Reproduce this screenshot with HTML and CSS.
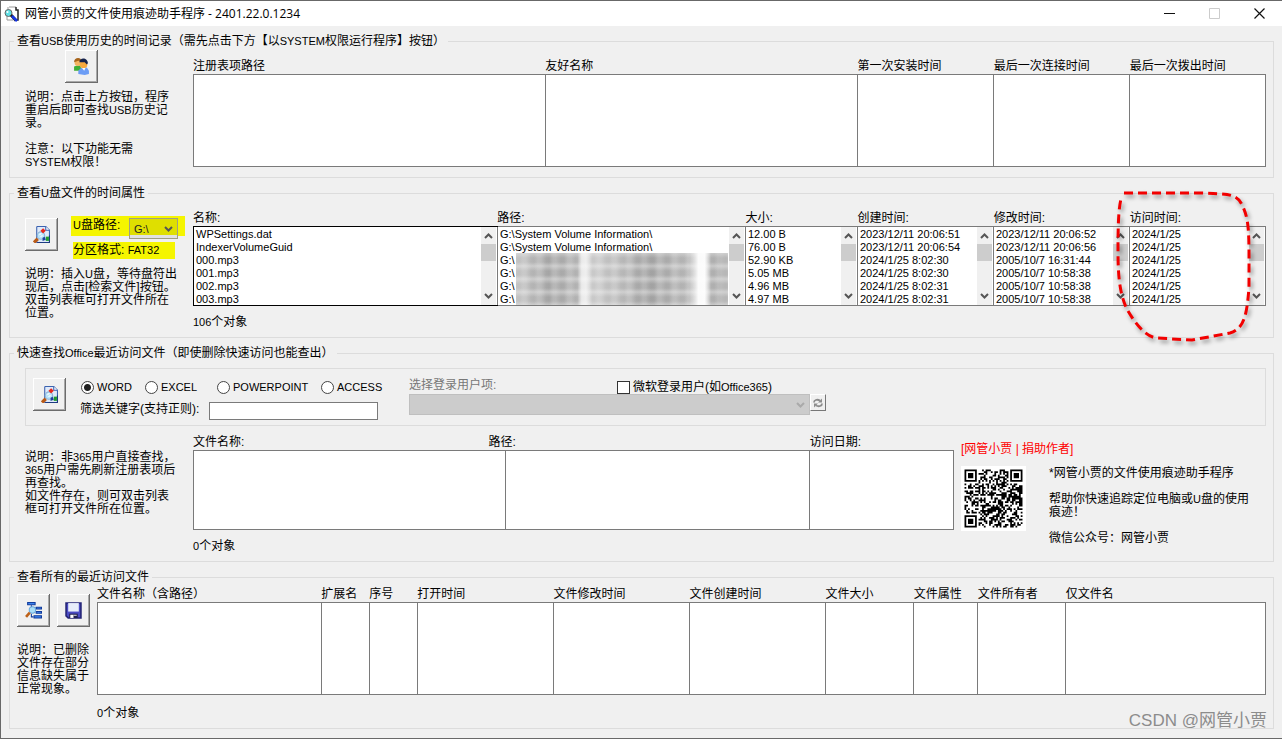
FILE: index.html
```html
<!DOCTYPE html>
<html lang="zh-CN">
<head>
<meta charset="utf-8">
<title>网管小贾的文件使用痕迹助手程序</title>
<link rel="stylesheet" href="styles.css">
</head>
<body>
<svg class="defs" aria-hidden="true">
  <symbol id="up" viewBox="0 0 9 6"><path d="M1 5L4.500 1.500L8 5" fill="none" stroke="#555" stroke-width="2"/></symbol>
  <symbol id="down" viewBox="0 0 9 6"><path d="M1 1L4.500 4.500L8 1" fill="none" stroke="currentColor" stroke-width="2"/></symbol>
  <symbol id="find" viewBox="0 0 16 16">
    <path d="M4 .5h8l3.500 3.500v11.500H3.500V1z" fill="#dfeafa" stroke="#3b62b0"/>
    <path d="M12 .5V4h3.500" fill="#fff" stroke="#3b62b0"/>
    <path d="M4 15.500h11.500V9" fill="none" stroke="#1c3a80"/>
    <circle cx="7.500" cy="9" r="3.500" fill="#b9e4fa" stroke="#8fb4d8"/>
    <path d="M9.500 2l2.500 2.500L9.500 7 7 4.500z" fill="#e8281c"/>
    <path d="M12 10h3v4h-3z" fill="#1e9b2d"/><path d="M9 11l2-1 1 3-3 1z" fill="#1c3f9e"/>
    <path d="M6 8l2-1M7 10l2-1" stroke="#fff"/>
    <path d="M4.500 12L1 15.500" stroke="#b85a17" stroke-width="3"/>
  </symbol>
</svg>
<div class="window">
  <header class="titlebar">
    <svg class="app-icon" viewBox="0 0 16 16">
      <path d="M5 1h7v2h2v11H5z" fill="#fff"/><path d="M5 1h7M4 1v3M3 9v5h6" stroke="#999" fill="none"/><path d="M12 1v3h2v10h-3" stroke="#222" fill="none" stroke-width="1.500"/>
      <circle cx="4.500" cy="7" r="3.500" fill="#5ee0e6" stroke="#666"/><circle cx="3.500" cy="6" r="1" fill="#fff"/>
      <path d="M7 9l5 5.500" stroke="#222" stroke-width="3"/><path d="M8 10l5 5" stroke="#1535e8" stroke-width="2.500"/>
    </svg>
    <h1 class="title">网管小贾的文件使用痕迹助手程序 - 2401.22.0.1234</h1>
    <div class="controls">
      <button class="control" aria-label="最小化"><svg viewBox="0 0 11 11"><path d="M0 5.500h11" stroke="#111"/></svg></button>
      <button class="control" aria-label="最大化" disabled><svg viewBox="0 0 11 11"><path d="M.5.5h10v10H.5z" fill="none" stroke="#ccc"/></svg></button>
      <button class="control" aria-label="关闭"><svg viewBox="0 0 11 11"><path d="M.5.5l10 10M10.500.5l-10 10" stroke="#111" stroke-width="1.200"/></svg></button>
    </div>
  </header>

  <main class="content">
    <fieldset class="group group-usb">
      <legend>查看<span class="lat">USB</span>使用历史的时间记录（需先点击下方【以<span class="lat">SYSTEM</span>权限运行程序】按钮）</legend>
      <div class="split">
        <div class="side side-usb">
          <button class="tool" aria-label="以SYSTEM权限运行程序">
            <svg viewBox="0 0 16 16">
              <path d="M1 12V8l3-1h3l1 5z" fill="#3fae35"/><circle cx="4.500" cy="4.500" r="3" fill="#f4b461"/><path d="M1 4c0-5 7-5 7-1L5 2.500z" fill="#a7641b"/>
              <path d="M5 15v-3l3-3h5l2 3v3l-4 1z" fill="#6c9df5"/><path d="M8 9h4l-1.500 3z" fill="#fff"/>
              <circle cx="10" cy="6" r="3.500" fill="#f7a93f"/><path d="M6 4c0-5 8-5 8 1l-1 1-2-2z" fill="#16234c"/>
            </svg>
          </button>
          <p class="note">说明：点击上方按钮，程序<br>重启后即可查找<span class="lat">USB</span>历史记<br>录。<br><br>注意：以下功能无需<br><span class="lat">SYSTEM</span>权限！</p>
        </div>
        <div class="lists">
          <div class="heads cols-usb"><span>注册表项路径</span><span>友好名称</span><span>第一次安装时间</span><span>最后一次连接时间</span><span>最后一次拨出时间</span></div>
          <div class="boxes cols-usb tall"><div></div><div></div><div></div><div></div><div></div></div>
        </div>
      </div>
    </fieldset>

    <fieldset class="group">
      <legend>查看<span class="lat">U</span>盘文件的时间属性</legend>
      <div class="split">
        <div class="side side-disk">
          <div class="disk">
            <button class="tool" aria-label="检索文件"><svg><use href="#find"/></svg></button>
            <div class="disk-fields">
              <div class="mark mark-path">
                <label for="drive"><span class="lat">U</span>盘路径:</label>
                <span class="combo drive"><select id="drive"><option>G:\</option></select><svg><use href="#down"/></svg></span>
              </div>
              <div class="mark mark-format">分区格式: <span class="lat">FAT32</span></div>
            </div>
          </div>
          <p class="note">说明：插入<span class="lat">U</span>盘，等待盘符出<br>现后，点击[检索文件]按钮。<br>双击列表框可打开文件所在<br>位置。</p>
        </div>
        <div class="lists">
          <div class="heads cols-disk"><span>名称:</span><span>路径:</span><span>大小:</span><span>创建时间:</span><span>修改时间:</span><span>访问时间:</span></div>
          <div class="boxes cols-disk short">
            <div class="focused"><ul><li>WPSettings.dat</li><li>IndexerVolumeGuid</li><li>000.mp3</li><li>001.mp3</li><li>002.mp3</li><li>003.mp3</li></ul><div class="scroll"><svg><use href="#up"/></svg><i></i><svg><use href="#down"/></svg></div></div>
            <div><ul><li>G:\System Volume Information\</li><li>G:\System Volume Information\</li><li>G:\</li><li>G:\</li><li>G:\</li><li>G:\</li></ul><div class="mosaic"></div><div class="scroll"><svg><use href="#up"/></svg><i></i><svg><use href="#down"/></svg></div></div>
            <div><ul><li>12.00 B</li><li>76.00 B</li><li>52.90 KB</li><li>5.05 MB</li><li>4.96 MB</li><li>4.97 MB</li></ul><div class="scroll"><svg><use href="#up"/></svg><i></i><svg><use href="#down"/></svg></div></div>
            <div><ul><li>2023/12/11 20:06:51</li><li>2023/12/11 20:06:54</li><li>2024/1/25 8:02:30</li><li>2024/1/25 8:02:30</li><li>2024/1/25 8:02:31</li><li>2024/1/25 8:02:31</li></ul><div class="scroll"><svg><use href="#up"/></svg><i></i><svg><use href="#down"/></svg></div></div>
            <div><ul><li>2023/12/11 20:06:52</li><li>2023/12/11 20:06:56</li><li>2005/10/7 16:31:44</li><li>2005/10/7 10:58:38</li><li>2005/10/7 10:58:38</li><li>2005/10/7 10:58:38</li></ul><div class="scroll"><svg><use href="#up"/></svg><i></i><svg><use href="#down"/></svg></div></div>
            <div><ul><li>2024/1/25</li><li>2024/1/25</li><li>2024/1/25</li><li>2024/1/25</li><li>2024/1/25</li><li>2024/1/25</li></ul><div class="scroll"><svg><use href="#up"/></svg><i></i><svg><use href="#down"/></svg></div>
              <svg class="circle-mark" viewBox="0 0 150 160"><path d="M14 6H92C118 7 126 7 131 16C140 32 139 46 139 100C137 128 134 142 120 146L82 153L46 151C34 149 24 134 18 124C8 106 8 80 8 60C8 34 9 16 12 9"/></svg>
            </div>
          </div>
          <p class="count"><span class="lat">106</span>个对象</p>
        </div>
      </div>
    </fieldset>

    <fieldset class="group">
      <legend>快速查找<span class="lat">Office</span>最近访问文件（即使删除快速访问也能查出）</legend>
      <div class="filter">
        <button class="tool" aria-label="查找最近访问文件"><svg><use href="#find"/></svg></button>
        <div class="query">
          <div class="apps">
            <label><input type="radio" name="app" checked>WORD</label>
            <label><input type="radio" name="app">EXCEL</label>
            <label><input type="radio" name="app">POWERPOINT</label>
            <label><input type="radio" name="app">ACCESS</label>
          </div>
          <div class="keyword"><label for="keyword">筛选关键字(支持正则):</label><input id="keyword" type="text"></div>
        </div>
        <div class="users">
          <div class="users-head">
            <label class="muted" for="user">选择登录用户项:</label>
            <label class="ms-user"><input type="checkbox"><span>微软登录用户(如<span class="lat">Office365</span>)</span></label>
          </div>
          <div class="users-pick">
            <span class="combo user"><select id="user" disabled></select><svg><use href="#down"/></svg></span>
            <button class="refresh" aria-label="刷新" disabled><svg viewBox="0 0 12 12"><path d="M2 5.500C2 3 5 2 8 3.500M10 6.500C10 9 7 10 4 8.500" fill="none" stroke="#8c8c8c" stroke-width="1.800"/><path d="M6 5.500h4v-4zM6 6.500H2v4z" fill="#8c8c8c"/></svg></button>
          </div>
        </div>
      </div>
      <div class="split split-office">
        <div class="side side-office">
          <p class="note">说明：非<span class="lat">365</span>用户直接查找，<br><span class="lat">365</span>用户需先刷新注册表项后<br>再查找。<br>如文件存在，则可双击列表<br>框可打开文件所在位置。</p>
        </div>
        <div class="office-lists">
          <div class="heads heads-office"><span>文件名称:</span><span>路径:</span><span>访问日期:</span></div>
          <div class="boxes cols-office short"><div></div><div></div><div></div></div>
          <p class="count"><span class="lat">0</span>个对象</p>
        </div>
        <div class="about">
          <a class="donate" href="#donate">[网管小贾 | 捐助作者]</a>
          <div class="about-body">
            <svg class="qr" id="qr" viewBox="0 0 37 37" role="img" aria-label="微信公众号二维码"></svg>
            <p class="note">*网管小贾的文件使用痕迹助手程序<br><br>帮助你快速追踪定位电脑或<span class="lat">U</span>盘的使用<br>痕迹！<br><br>微信公众号：网管小贾</p>
          </div>
        </div>
      </div>
    </fieldset>

    <fieldset class="group">
      <legend>查看所有的最近访问文件</legend>
      <div class="split split-all">
        <div class="side side-all">
          <div class="tools">
            <button class="tool" aria-label="查找"><svg viewBox="0 0 16 16"><path d="M2.500.5h7v2h-7zM10.500 5h5v1.500h-5zM10.500 9h5v1.500h-5zM8.500 13h7v2h-7z" fill="#3c82ee" stroke="#123d9c"/><path d="M6 3v3M6 11v3h2M8 6h3" stroke="#123d9c" fill="none"/><circle cx="7" cy="7.500" r="3" fill="#a8def8" stroke="#6aa8dc"/><path d="M4.500 10L1 14" stroke="#bd6119" stroke-width="2.500"/></svg></button>
            <button class="tool" aria-label="保存"><svg viewBox="0 0 16 16"><path d="M1 1h14v14H3l-2-2z" fill="#4b4bc4" stroke="#252577" stroke-width="1.500"/><path d="M3 1h10v8H3z" fill="#e7edfb"/><path d="M4 11h8v4H4z" fill="#20204f"/><path d="M5 12h3v3H5z" fill="#fff"/><path d="M8 12h3v1H8z" fill="#ddd"/></svg></button>
          </div>
          <p class="note">说明：已删除<br>文件存在部分<br>信息缺失属于<br>正常现象。</p>
        </div>
        <div class="lists lists-all">
          <div class="heads cols-all"><span>文件名称（含路径）</span><span>扩展名</span><span>序号</span><span>打开时间</span><span>文件修改时间</span><span>文件创建时间</span><span>文件大小</span><span>文件属性</span><span>文件所有者</span><span>仅文件名</span></div>
          <div class="boxes cols-all tall"><div></div><div></div><div></div><div></div><div></div><div></div><div></div><div></div><div></div><div></div></div>
          <p class="count count-all"><span class="lat">0</span>个对象</p>
        </div>
      </div>
    </fieldset>
  </main>
  <div class="watermark">CSDN @网管小贾</div>
</div>
<script src="script.js"></script>
</body>
</html>
```
FILE: styles.css
```css
* { box-sizing: border-box; }
body, h1, p, ul, fieldset { margin: 0; padding: 0; }
body {
  background: #f0f0f0;
  color: #000;
  font: 12px/14px "Liberation Sans", "Noto Sans CJK SC", sans-serif;
}
button, input, select { font: inherit; color: inherit; margin: 0; padding: 0; }
svg { display: block; }
.defs { display: none; }
.lat { font-size: 11px; }
.window {
  position: relative;
  min-height: 100vh;
  border: 1px solid #686868;
  border-right: 0;
  background: #f0f0f0;
}
.titlebar { display: flex; align-items: center; height: 25px; padding-left: 3px; background: #fff; }
.app-icon { width: 16px; height: 16px; }
.title { margin-left: 5px; flex: 1; font: 12px/18px "Open Sans", "Noto Sans CJK SC", sans-serif; }
.controls { display: flex; }
.control { display: grid; place-items: center; width: 45px; height: 25px; border: 0; background: none; }
.control svg { width: 11px; height: 11px; }

.content { display: flex; flex-direction: column; gap: 8px; padding: 8px; }
.group { min-width: 0; border: 1px solid #dcdcdc; padding: 0 7px 9px; }
.group-usb { padding-bottom: 8px; }
.group legend { height: 14px; margin-left: -3px; padding: 0 3px; line-height: 14px; white-space: nowrap; }
.split { display: grid; grid-template-columns: 176px minmax(0, 1fr); align-items: start; }
.split-office { grid-template-columns: 176px minmax(0, 761fr) minmax(300px, 312fr); margin-top: 8px; }
.split-all { grid-template-columns: 80px minmax(0, 1fr); }
.side { padding-left: 8px; }
.side-usb { padding-top: 2px; }
.side-usb .tool { margin: 0 0 8px 40px; }
.side-disk { padding-top: 16px; }
.side-office { padding-top: 17px; }
.side-all { padding: 10px 0 0; }
.note { line-height: 13px; white-space: nowrap; }

.tool {
  display: grid;
  place-items: center;
  flex: none;
  width: 33px;
  height: 33px;
  border: 0;
  background: #f0f0f0;
  box-shadow: inset -1px -1px #6c6c6c, inset 1px 1px #fff, inset -2px -2px #a8a8a8;
}
.tool svg { width: 17px; height: 17px; }
.tools { display: flex; gap: 7px; margin-bottom: 17px; }

.lists { padding-top: 10px; }
.lists-all { padding-top: 2px; }
.heads { display: grid; height: 16px; line-height: 16px; white-space: nowrap; }
.boxes { display: grid; grid-template-rows: minmax(0, 1fr); border: 1px solid #7a7a7a; border-left: 0; background: #fff; }
.boxes > div { position: relative; display: flex; min-width: 0; border-left: 1px solid #7a7a7a; }
.tall { height: 93px; }
.short { height: 80px; }
.cols-usb { grid-template-columns: 352fr 312fr 136fr 136fr 136fr; }
.cols-disk { grid-template-columns: 304fr 248fr 112fr 136fr 136fr 136fr; }
.cols-office { grid-template-columns: 312fr 304fr 144fr; }
.heads-office { grid-template-columns: 295fr 321fr 144fr; }
.cols-all { grid-template-columns: 224fr 48fr 48fr 136fr 136fr 136fr 88fr 64fr 88fr 200fr; }
.boxes ul { flex: 1; min-width: 0; padding: 1px 0 0 2px; list-style: none; font-size: 11px; line-height: 13px; white-space: nowrap; }
.boxes .focused { outline: 1px solid #000; margin-left: 1px; border-left: 0; }
.scroll { display: flex; flex-direction: column; align-items: center; width: 15px; margin-right: 1px; padding: 6px 0; background: #f0f0f0; color: #555; }
.scroll svg { width: 9px; height: 6px; flex: none; }
.scroll i { width: 15px; height: 17px; margin: 5px 0 auto; background: #cdcdcd; }
.mosaic {
  position: absolute;
  left: 18px;
  right: 17px;
  top: 26px;
  bottom: 0;
  background:
    linear-gradient(90deg, #fff0 29%, #ffffffa0 31%, #ffffffa0 33%, #fff0 36%, #fff0 82%, #fffffff0 86%, #fffffff0 89%, #fff0 92%),
    repeating-linear-gradient(90deg, #fff0 0 3px, #ffffff30 7px 10px, #fff0 15px),
    repeating-linear-gradient(180deg, #fff5 0, #fff0 5px, #fff0 9px, #fff5 13px),
    linear-gradient(90deg, #c4c4c4, #a4a4a4 16%, #b0b0b0 28%, #ccc 34%, #b8b8b8 50%, #a0a0a0 62%, #b0b0b0 76%, #bbb 86%, #aaa 96%, #bbb);
}
.circle-mark {
  position: absolute;
  z-index: 2;
  left: -20px;
  top: -40px;
  width: 150px;
  height: 160px;
  overflow: visible;
  pointer-events: none;
  filter: drop-shadow(2px 3px 2px #0006);
}
.circle-mark path { fill: none; stroke: #f20000; stroke-width: 3; stroke-dasharray: 9 5; }
.count { margin-top: 9px; margin-bottom: -1px; }
.count-all { margin-top: 11px; }

.disk { display: flex; margin-bottom: 9px; gap: 13px; }
.disk .tool { margin-top: 2px; }
.disk-fields { display: flex; flex-direction: column; gap: 6px; }
.mark { white-space: nowrap; padding-left: 2px; }
.mark-path { display: flex; width: 114px; height: 20px; line-height: 18px; background: #f5f500; }
.mark-path label { width: 56px; }
.mark-format { width: 104px; height: 17px; line-height: 16px; background: #f5f500; background-clip: content-box; }
.combo { position: relative; display: block; }
.combo select { appearance: none; width: 100%; border: 1px solid #a0a080; border-radius: 0; }
.combo svg { position: absolute; width: 9px; height: 6px; right: 5px; top: 8px; pointer-events: none; }
.drive { width: 49px; margin-top: 2px; color: #555; }
.drive select { height: 21px; padding-left: 4px; font-size: 11px; color: #222; background: linear-gradient(#dfdf00 16px, #e1e1e1 16px); }

.filter { display: flex; margin: 8px 0 0 8px; border: 1px solid #dcdcdc; height: 58px; padding: 9px 7px; }
.query { width: 329px; margin-left: 14px; }
.apps { display: grid; grid-template-columns: 64px 72px 104px auto; padding: 1px 0 0 1px; font-size: 11px; }
.apps label { display: flex; align-items: center; gap: 3px; height: 16px; }
.apps input { appearance: none; width: 13px; height: 13px; border: 1px solid #444; border-radius: 50%; background: #fff; }
.apps input:checked { background: radial-gradient(circle, #222 0 3px, #fff 4px); }
.keyword { display: flex; margin-top: 7px; }
.keyword label { width: 129px; white-space: nowrap; }
.keyword input { width: 169px; height: 18px; border: 1px solid #7a7a7a; background: #fff; }
.users-head { display: flex; height: 16px; line-height: 14px; }
.muted { width: 208px; color: #777; }
.ms-user { display: flex; gap: 3px; align-items: center; white-space: nowrap; padding-top: 2px; }
.ms-user input { appearance: none; width: 13px; height: 13px; border: 1px solid #333; background: #fff; }
.users-pick { display: flex; align-items: flex-start; }
.user { width: 401px; color: #aaa; }
.user select { height: 21px; border-color: #bfbfbf; background: #ccc; opacity: 1; }
.refresh { display: grid; place-items: center; width: 16px; height: 17px; border: 1px solid; border-color: #fff #777 #777 #fff; background: #f0f0f0; }
.refresh svg { width: 12px; height: 12px; }

.about { padding: 8px 0 0 7px; white-space: nowrap; }
.donate { display: block; color: #f00; text-decoration: none; }
.about-body { display: flex; gap: 23px; margin-top: 10px; }
.about .note { padding-top: 1px; }
.qr { width: 65px; height: 65px; background: #fff; flex: none; }
.watermark { position: absolute; right: 15px; bottom: 5px; color: #8c8c8c; font: 17px/24px "Liberation Sans", "Noto Sans CJK SC", sans-serif; }
```
FILE: script.js
```javascript
// Draws the code in the "about" area: three finders, timing rows and data modules.
const size = 33, quiet = 2;
let seed = 20240122, d = "";
const next = () => (seed = (seed * 1103515245 + 12345) % 2147483648) / 2147483648;
function finder(x, y) {
  const corners = [[0, 0], [size - 7, 0], [0, size - 7]];
  for (const [cx, cy] of corners) {
    const dx = x - cx, dy = y - cy;
    if (dx < -1 || dy < -1 || dx > 7 || dy > 7) continue;
    const ring = Math.max(Math.abs(dx - 3), Math.abs(dy - 3));
    return ring === 3 || ring <= 1;
  }
  return null;
}
for (let y = 0; y < size; y++) {
  for (let x = 0; x < size; x++) {
    const f = finder(x, y);
    const timing = x === 6 || y === 6;
    const random = next() < 0.52;
    const on = f !== null ? f : timing ? (x + y) % 2 === 0 : random;
    if (on) d += `M${x + quiet} ${y + quiet}h1v1h-1z`;
  }
}
const path = document.createElementNS("http://www.w3.org/2000/svg", "path");
path.setAttribute("d", d);
document.getElementById("qr").append(path);
```
